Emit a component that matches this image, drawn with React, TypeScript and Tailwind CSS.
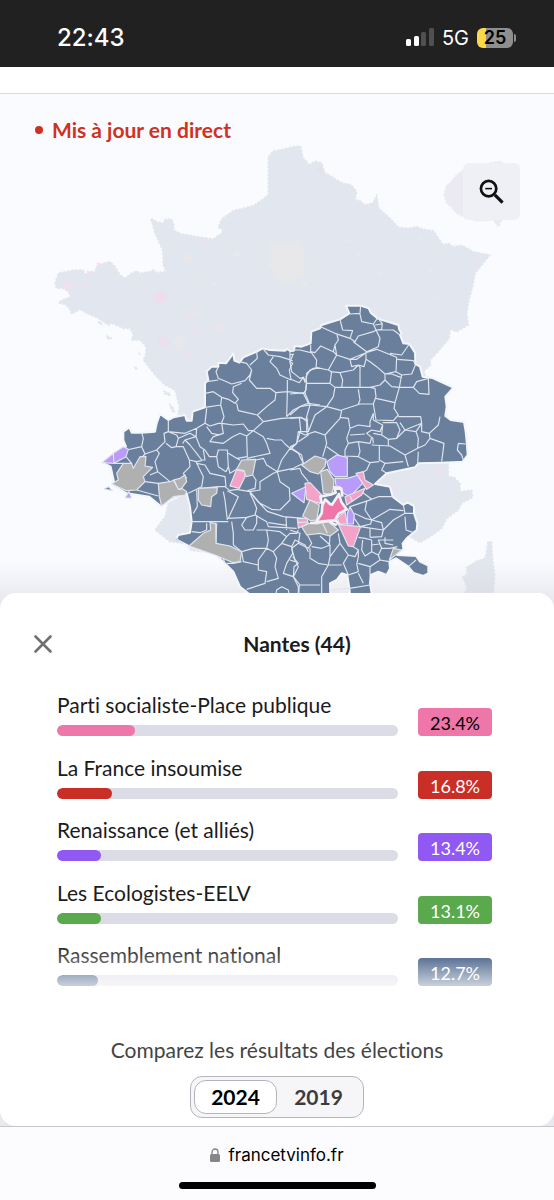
import { useState } from "react";

interface Result {
    party: string;
    score: string;
    width: number;
    color: string;
    text: string;
}

interface Zone {
    fill: string;
    d: string;
}

const results: Result[] = [
    { party: "Parti socialiste-Place publique", score: "23.4%", width: 23, color: "bg-[#ee76a9]", text: "text-black" },
    { party: "La France insoumise", score: "16.8%", width: 16, color: "bg-[#c92f27]", text: "text-white" },
    { party: "Renaissance (et alliés)", score: "13.4%", width: 13, color: "bg-[#9159f3]", text: "text-white" },
    { party: "Les Ecologistes-EELV", score: "13.1%", width: 13, color: "bg-[#5aa94d]", text: "text-white" },
    { party: "Rassemblement national", score: "12.7%", width: 12, color: "bg-[#264573]", text: "text-white" },
];

const years = ["2024", "2019"];

const BLUE = "#6a7f9c";
const GREY = "#b0b0b0";
const PURPLE = "#b99bfb";
const PINK = "#f3a3c8";

// mainland, clockwise from the northern tip
const france =
    "M805 190 818 172 850 166 880 158 902 156 908 190 928 212 945 202 965 206 974 236 992 246 1010 258 1030 268 1054 273 1070 293 1065 318 1080 320 1095 333 1120 326 1130 303 1136 343 1170 373 1195 400 1225 403 1250 398 1270 406 1300 410 1330 453 1345 448 1360 458 1385 454 1420 473 1470 483 1425 538 1418 578 1407 618 1400 658 1405 693 1370 713 1350 706 1348 733 1310 778 1290 798 1292 813 1270 833 1330 930 1348 1000 1345 1110 1345 1148 1362 1150 1380 1168 1380 1193 1415 1188 1418 1210 1385 1228 1375 1248 1340 1273 1325 1303 1290 1328 1260 1346 1225 1325 1150 1380 700 1380 575 1370 555 1348 510 1343 465 1308 495 1268 505 1228 560 1198 620 1100 620 1000 535 960 538 938 530 908 525 888 495 873 465 843 430 798 438 778 438 758 420 738 395 738 400 723 390 703 370 703 335 688 325 693 295 673 265 660 240 646 215 660 210 648 200 633 175 626 190 616 212 610 205 593 190 583 170 583 165 568 175 538 205 531 225 528 250 528 255 540 285 533 290 518 310 508 330 503 345 518 360 543 375 553 395 538 410 531 420 538 450 533 460 528 470 536 498 533 490 513 488 468 465 418 452 373 470 383 490 388 495 376 515 376 522 393 520 408 545 420 560 422 590 428 640 435 665 418 668 408 655 400 665 375 700 350 760 335 790 315 805 302Z";

const corsica =
    "M1464 1345 1475 1342 1478 1400 1484 1440 1480 1498 1466 1545 1410 1545 1395 1498 1402 1480 1388 1450 1402 1440 1400 1420 1430 1402 1456 1392Z";

const parisInset =
    "M1390 228 1365 248 1352 266 1340 273 1332 303 1340 328 1355 340 1370 358 1400 373 1430 380 1480 378 1495 398 1506 376 1550 340 1550 240 1500 202 1475 206Z";

// faint areas left over inside the dimmed mainland: x, y, radius, colour
const specks: [number, number, number, string][] = [
    [204, 576, 12, "#eee2ef"], [232, 578, 6, "#eae3ef"], [256, 572, 6, "#ebe3ef"], [268, 540, 8, "#eae3ef"],
    [298, 514, 6, "#efe2ef"], [482, 610, 18, "#ecdeee"], [490, 742, 14, "#ebdfee"], [540, 744, 18, "#e8e7ec"],
    [563, 494, 12, "#e8e8ec"], [710, 480, 8, "#e9e9ed"], [608, 448, 7, "#e9e1ee"], [656, 702, 12, "#e8e6ec"],
    [590, 718, 9, "#e9e1ee"], [568, 666, 12, "#e8e6ec"], [590, 656, 8, "#e8e6ec"], [562, 782, 8, "#ebe0ee"],
    [572, 572, 6, "#e8e6ed"], [600, 568, 5, "#e8e6ed"], [756, 410, 5, "#e8e6ed"], [876, 344, 6, "#e8e6ed"],
    [850, 286, 4, "#e8e6ed"], [720, 726, 9, "#e8e6ed"], [838, 650, 6, "#e8e6ed"], [824, 716, 5, "#e8e6ed"],
    [1040, 440, 4, "#e9e8ef"], [1260, 432, 4, "#e9e8ef"], [1142, 538, 4, "#e9e8ef"], [1428, 506, 8, "#e6e4ee"],
    [960, 230, 9, "#e5e2ec"], [1290, 528, 4, "#e9e8ef"], [1300, 606, 4, "#e9e8ef"], [1074, 482, 3, "#e9e8ef"],
    [912, 570, 6, "#e8e8ec"], [925, 712, 5, "#e8e6ed"], [1180, 1180, 8, "#eae2ee"], [1230, 1160, 6, "#eae2ee"],
    [1320, 1130, 10, "#e9e3ef"], [1280, 1185, 4, "#eae2ee"], [640, 570, 4, "#e9e8ef"],
];

const idf =
    "M812 440 822 450 835 444 848 454 862 440 876 450 892 442 900 458 912 470 908 485 914 500 908 520 912 538 900 550 892 545 880 566 868 558 855 568 845 555 830 558 822 545 824 525 810 515 818 495 808 480 818 465Z";

const zoomedArea =
    "M430 160 433 182 448 188 460 172 500 155 518 145 540 150 585 152 592 147 600 153 612 152 614 138 635 140 662 130 664 95 690 85 695 75 750 58 778 40 768 17 812 17 836 25 842 38 862 55 870 58 925 75 928 90 935 100 930 105 940 130 958 132 975 158 976 192 990 200 998 230 1028 234 1090 263 1066 290 1070 320 1066 348 1082 360 1122 366 1127 395 1130 425 1133 465 1118 485 1055 488 985 490 975 502 890 520 855 552 900 560 908 590 940 615 952 607 972 618 972 640 982 670 980 690 950 715 938 730 940 748 922 765 978 768 990 785 1015 797 1015 820 1000 828 970 818 955 800 918 775 898 785 900 805 890 825 865 815 842 825 840 850 845 880 845 930 785 930 778 865 772 825 755 820 740 840 720 850 722 930 490 930 475 880 450 860 430 815 400 785 378 765 300 740 258 718 265 705 300 698 305 665 300 620 290 580 260 590 212 618 178 590 110 580 66 553 72 545 62 500 38 488 70 460 108 440 100 420 100 395 118 382 125 398 155 398 195 395 200 370 210 342 235 360 250 352 285 345 290 362 305 362 308 335 345 322 345 250 355 240 350 215 365 200 385 200 385 188 408 190Z";

const westBorders =
    "M385 200 378 215 385 235 425 252 465 242 480 225 485 210 470 190 448 185M350 245 385 240M485 210 478 240 500 265 540 265 558 278 592 275M345 280 370 275 395 292 415 298 435 310 445 298 428 278 430 260 455 250M395 292 392 315 402 350 395 368M345 322 392 315M558 278 555 300 530 320 502 345 445 332 440 310M502 345 520 365 490 392M520 365 575 355 628 352 655 360M592 240 592 275 590 350M600 155 600 185 608 190 598 210 603 238 628 248 640 232 645 248M518 145 535 165 570 170 608 182M550 170 540 185 560 205 570 225 603 240M500 155 502 175 480 195M592 275 640 280 648 270 650 220 670 205 690 205M640 280 655 310 690 315M590 350 610 330 640 315 655 310M650 350 650 395 655 405 625 425M628 352 632 390 620 430 600 445 585 432 575 420 555 420 530 415M235 360 235 395 285 400 320 385 345 370 350 325M155 398 160 415 155 440 110 450M235 395 222 400 225 425 200 450M235 395 260 405 265 415 258 440 245 443 228 430M265 415 300 400 318 410 285 420 278 430M320 385 318 410 330 440 345 450 358 470 380 470 385 450 412 450 415 500 408 515M285 420 300 435 320 460 335 480 345 480 340 450M258 440 280 440 298 480 320 485 335 482M345 370 360 378 385 370 395 370 400 400 370 410 360 425 400 430 428 410 450 400 470 408 472 470 440 475 415 460M395 370 430 375 460 372 475 392 490 392 520 410 530 430 535 445 540 460 470 475M350 380 365 400 390 405M470 408 490 392M600 445 575 480 562 515 530 495 520 475 498 480M600 445 625 460 640 490 610 505 562 515M440 475 450 480M562 515 550 520 510 545 510 570 480 575M562 515 570 545 598 565 600 600 570 630 545 628 510 610 480 575M488 525 498 540 495 565 470 573M200 450 165 462 150 478M200 450 208 460 195 485 203 515 180 525M203 515 240 545M155 440 165 462M108 470 125 490M100 490 72 490M165 545 205 550M140 570 205 588M298 480 300 500 280 520 290 535M318 485 330 510 340 530 335 560 295 580M320 490 345 495 360 520 405 530 408 560M380 470 385 500 408 515M335 565 385 560 405 560 420 572 440 568 480 575M440 508 420 520 415 500M320 570 322 620 310 640M400 575 405 600 412 660M300 665 415 665M412 572 445 590 415 655 470 652 495 645 500 625 490 600 480 580M476 572 505 606 532 634 580 650 640 655M495 645 530 665 535 680 620 685M535 668 590 676M588 652 590 690M470 652 455 675 465 690 490 690 500 670 500 645M425 665 430 700 430 735M350 670 350 690 330 698 305 695M380 670 378 730M430 735 455 755 490 745 530 745 535 720 530 690 500 690M530 690 570 695 590 710 575 730 550 755 530 745 505 780 505 810M455 755 460 785 505 795 505 810 530 815 525 850 470 868M550 755 560 775 555 800 565 835 530 845M575 730 605 740 608 760 590 790 580 820 610 830 612 800 625 790 608 770M605 740 615 720 645 735 655 755M590 710 600 700 620 700 625 690M610 830 625 860 625 900M555 900 560 870 575 860 595 870 600 900M455 785 430 790 410 790M378 755 400 775 405 790";

const eastBorders =
    "M180 42 210 40 212 17M210 42 215 65 250 72 262 55M150 58 158 90 188 92 180 115 135 100 92 80M180 115 195 125 205 108 250 95 258 90 250 72M258 90 275 88 277 70 268 60M275 72 255 75M258 90 310 90 330 105M258 90 270 115 265 140 230 155 190 125M140 100 145 120 135 135 140 165 180 178 228 158M62 135 62 155 75 158 92 138 130 155 140 165M130 155 135 135M62 155 80 180 78 205 60 210M0 150 30 150 62 158M0 165 10 162 0 185 5 215 30 235 40 232 48 245M140 165 115 210 80 203 60 210 48 230 50 250 120 250 125 215 115 210M120 215 150 218 158 240 155 262 135 262 120 250M150 218 190 210 205 195 212 205M180 178 185 200 205 195 222 200 228 178 228 158 200 178 180 178M228 158 260 148 320 172 318 215 285 222 260 200 240 185 228 178M210 205 210 262M300 160 335 165 358 132M322 178 370 182 376 192M318 215 335 225 365 222 376 195M335 225 328 262 370 262 380 245 415 235 417 283 388 280 370 262M285 222 285 240 270 255 240 262 210 262 155 262M285 240 305 260 328 262M285 222 305 222 332 232M240 262 255 265 258 290 250 312 210 312 155 330M135 262 130 290 110 320 155 332M205 268 210 300 205 312M50 250 45 280 60 315 110 320M0 282 45 278M0 345 30 320 60 315M0 355 35 352 50 365M60 315 50 350 55 395M110 320 75 345 55 395M105 405 150 355 155 332M150 352 175 355 180 385 170 415 175 430M258 295 315 308 328 262M315 308 312 325 325 345 310 362 258 360 250 312M325 350 392 350 395 370 345 390 330 368M250 340 240 365 240 380 205 375 180 385M250 340 250 360 278 375 270 395 245 390 230 400 245 412 240 430 205 425M225 402 180 405M248 412 250 430M278 368 320 368 330 390 320 415 295 418 275 405 278 375M250 400 275 405M295 418 295 438M345 390 378 395 385 415 383 445 345 465 300 438 245 435M320 415 345 390M378 395 395 370 395 395 418 400 420 415 405 435 383 445M418 400 445 375 450 350M420 415 462 430 455 485M385 455 383 490M505 430 502 450 515 465 520 480M505 430 527 432M345 465 355 500M340 485 285 490 268 480 268 438M285 490 275 510 290 520M268 485 240 488 230 510 205 525M205 425 210 455 205 470 165 468 165 450 175 430 205 425M240 488 205 470M55 395 25 395 20 430 5 445 35 465 40 490M25 395 45 405 75 395 105 405 110 430 98 470M110 440 150 468M0 440 18 432M30 505 35 520 55 545M30 505 0 510M218 550 250 555M215 575 245 598 265 590 308 590M180 620 225 605 245 598M193 640 225 655 245 660 225 630 230 605M245 660 300 628 340 632M245 660 275 668 280 690 310 660 345 640M345 650 348 690 370 698M340 615 345 640 370 640M210 680 245 685 280 690 275 710 240 712M193 655 210 680 242 672 245 660M240 685 240 712M205 712 225 715 245 720 245 755 225 768 215 750 218 720M190 740 205 750 205 770 200 795M245 755 265 765 275 745 265 720 310 720M245 735 268 732M275 745 300 745 322 740M285 712 285 730 310 735M265 765 270 780 240 800 205 790M270 780 298 785M0 690 30 700 25 730 5 745M50 700 65 730 55 745 25 730M90 708 120 735 95 745 65 740M120 708 118 735M60 745 60 775 85 790 115 795 120 770 150 730 145 700M120 735 120 770M150 730 175 765 195 770 205 750M175 765 160 790 175 825 205 815 200 790M155 795 115 795 95 830 95 880M5 745 15 780 25 800 10 830 30 855 90 855M0 780 15 785M28 855 25 900M120 870 178 865 240 855M205 820 220 850M240 800 240 825M355 800 378 780";

const westZones: Zone[] = [
    { fill: PURPLE, d: "M36 488 70 460 100 440 115 448 108 470 72 490ZM70 460 72 490" },
    { fill: GREY, d: "M65 552 85 540 80 520 100 490 125 490 130 505 150 470 168 470 165 498 188 502 160 530 165 545 140 570 110 572Z" },
    { fill: PURPLE, d: "M105 594 117 575 125 594Z" },
    { fill: BLUE, d: "M42 567 55 560 68 572Z" },
    { fill: GREY, d: "M205 550 240 545 252 540 265 568 275 565 290 575 285 585 250 590 215 618 208 590ZM250 540 270 535 285 525 290 545 272 568 265 568Z" },
    { fill: GREY, d: "M325 565 382 562 380 580 365 590 362 620 335 615 325 600Z" },
    { fill: GREY, d: "M297 738 340 700 362 690 360 668 377 670 378 730 420 738 455 755 450 785 430 788 375 765Z" },
    { fill: PURPLE, d: "M250 718 260 716 280 732Z" },
    { fill: PINK, d: "M440 508 465 515 465 530 448 565 420 558Z" },
    { fill: GREY, d: "M455 480 497 478 488 525 468 530 462 512 440 508Z" },
];

const eastZones: Zone[] = [
    { fill: GREY, d: "M35 495 75 468 108 478 105 500 85 522 60 515Z" },
    { fill: PURPLE, d: "M110 485 140 465 172 472 172 530 135 530 120 515Z" },
    { fill: GREY, d: "M92 515 112 508 132 540 130 565 125 585 100 580Z" },
    { fill: PURPLE, d: "M135 535 172 535 205 525 218 550 180 590 160 580 150 560 138 558Z" },
    { fill: PINK, d: "M198 520 220 515 225 540 250 555 230 568 218 550 205 530Z" },
    { fill: PINK, d: "M165 590 225 565 215 585 170 615ZM180 588 188 605" },
    { fill: PURPLE, d: "M5 580 48 560 42 608Z" },
    { fill: PINK, d: "M45 550 60 548 95 585 90 610 50 598Z" },
    { fill: GREY, d: "M60 600 88 615 80 660 62 662 38 648Z" },
    { fill: PINK, d: "M22 655 50 655 55 670 25 685ZM24 668 55 666" },
    { fill: GREY, d: "M35 680 60 670 80 672 115 665 145 690 120 708 90 700 50 705ZM98 670 112 700" },
    { fill: PINK, d: "M145 673 212 680 190 740 175 738Z" },
    { fill: PURPLE, d: "M172 640 180 620 193 645 190 672 172 672Z" },
    { fill: PINK, d: "M140 655 165 635 172 672 150 672Z" },
    { fill: GREY, d: "M298 780 310 745 335 750Z" },
];

const StatusBar = () => (
    <header className="flex h-[67px] items-center justify-between bg-[#212121] pt-2 pr-[38px] pl-[57px] font-['Inter',sans-serif] text-white">
        <time className="text-2xl font-medium">22:43</time>
        <div className="flex items-center gap-2">
            <svg width="28" height="19" viewBox="0 0 28 19" aria-hidden="true">
                <rect x="0" y="11" width="5" height="7" rx="1.5" fill="#fff" />
                <rect x="8" y="8" width="5" height="10" rx="1.5" fill="#fff" />
                <rect x="15" y="4" width="5" height="14" rx="1.5" fill="#505050" />
                <rect x="23" y="0" width="5" height="18" rx="1.5" fill="#505050" />
            </svg>
            <span className="text-xl">5G</span>
            <div className="flex items-center gap-px">
                <span className="flex h-5 w-9 items-center justify-center rounded-md bg-linear-to-r from-[#fbd84a] from-25% to-[#8e8e8e] to-25% text-lg font-semibold text-black">
                    25
                </span>
                <span className="h-2 w-0.5 rounded-r bg-[#8e8e8e]" />
            </div>
        </div>
    </header>
);

const ElectionMap = () => (
    <svg viewBox="0 0 1662 1545" className="block w-full" role="img" aria-label="Carte des résultats par commune">
        <defs>
            <linearGradient id="shade" x1="0" y1="0" x2="0" y2="1">
                <stop offset="0" stopColor="#d6d6dc" stopOpacity="0" />
                <stop offset="1" stopColor="#d6d6dc" stopOpacity="0.6" />
            </linearGradient>
        </defs>
        <g fill="#e2e6ee" stroke="#e2e6ee" strokeWidth="5" strokeDasharray="7 5" strokeLinejoin="round">
            <path d={france} />
            <path d={corsica} />
            <path d={parisInset} fill="#ebeaf3" stroke="#ebeaf3" />
            <path d="M296 684h6l4 6h-8zM320 726l14 6-4 4-10-4zM404 820l10 3-8 2zM416 776l6 8zM492 892l20 8-4 4-14-5zM508 930l12 12 4 14-8-6z" />
        </g>
        <path d={idf} fill="#e8e8ea" stroke="#e8e8ea" strokeWidth="10" strokeDasharray="4 5" />
        {specks.map(([x, y, r, color]) => (
            <circle key={`${x}-${y}`} cx={x} cy={y} r={r} fill={color} stroke={color} strokeWidth="8" strokeDasharray="4 6" />
        ))}
        <rect x="0" y="1400" width="1662" height="145" fill="url(#shade)" />
        <g transform="translate(270 618)" strokeLinejoin="round" stroke="#dfe6ef" strokeWidth="3.5">
            <path d={zoomedArea} fill={BLUE} stroke="#f3f6fa" strokeWidth="6" />
            <path d={westBorders} fill="none" />
            <path d={eastBorders} fill="none" transform="translate(600 0)" />
            {westZones.map((zone) => (
                <path key={zone.d} d={zone.d} fill={zone.fill} />
            ))}
            <g transform="translate(600 0)">
                {eastZones.map((zone) => (
                    <path key={zone.d} d={zone.d} fill={zone.fill} />
                ))}
                <path
                    d="M96 612 91 590 120 584 137 578 133 562 154 566 157 590M60 669 84 667M134 659 146 672M120 666 140 676"
                    fill="none"
                    stroke="#f3f1f5"
                    strokeWidth="8"
                />
                <path
                    d="M78 667 95 640 97 616 106 598 120 612 126 614 147 582 154 606 170 628 146 641 134 661 100 664Z"
                    fill="#ee76a9"
                    stroke="#f3f1f5"
                    strokeWidth="8"
                />
            </g>
        </g>
    </svg>
);

const ResultRow = ({ party, score, width, color, text }: Result) => (
    <li className="flex items-end gap-5">
        <div className="flex-1">
            <p className="pb-2 text-[21px]/6">{party}</p>
            <div className="h-[11px] overflow-hidden rounded-full bg-[#dcdce6]">
                <div className={`h-full rounded-full ${color}`} style={{ width: `${width}%` }} />
            </div>
        </div>
        <span className={`h-7 w-[74px] rounded pt-[3px] text-center text-lg/6 ${color} ${text}`}>{score}</span>
    </li>
);

export default function App() {
    const [year, setYear] = useState("2024");

    return (
        <div className="bg-white font-['Lato',sans-serif] text-[#1b1b1b] [font-variant-ligatures:none]">
            <StatusBar />
            <div className="h-[27px] border-b border-[#d9d9e3]" />

            <main className="bg-[#e8e8ee]">
                <section className="relative bg-[#fafbff]">
                    <ElectionMap />
                    <p className="absolute top-6 left-[35px] flex items-center gap-[9px] text-[21px]/6 font-bold text-[#cf3222]">
                        <span className="size-2 rounded-full bg-[#cf3222]" />
                        Mis à jour en direct
                    </p>
                    <button
                        type="button"
                        aria-label="Dézoomer"
                        className="absolute top-[69px] right-[34px] flex size-[57px] items-center justify-center rounded-md bg-[#efeff6]"
                    >
                        <svg width="25" height="25" viewBox="0 0 26 26" fill="none" stroke="#111" aria-hidden="true">
                            <circle cx="10" cy="10" r="8" strokeWidth="2.8" />
                            <path d="M6.5 10h7" strokeWidth="1.6" />
                            <path d="m16.5 16.5 8 8" strokeWidth="3.4" />
                        </svg>
                    </button>
                </section>

                <section className="relative -mt-4 rounded-2xl bg-white pb-2">
                    <div className="flex items-center pt-[37px] pr-3 pl-[34px]">
                        <button type="button" aria-label="Fermer">
                            <svg width="18" height="18" viewBox="0 0 18 18" stroke="#707070" strokeWidth="2.6" strokeLinecap="round" aria-hidden="true">
                                <path d="m1.5 1.5 15 15M16.5 1.5l-15 15" />
                            </svg>
                        </button>
                        <h2 className="flex-1 text-center text-[21px]/7 font-bold">Nantes (44)</h2>
                    </div>

                    <div className="relative pt-[35px] pr-[62px] pb-[14px] pl-[57px]">
                        <ul className="flex h-[293px] flex-col justify-between">
                            {results.map((result) => (
                                <ResultRow key={result.party} {...result} />
                            ))}
                        </ul>
                        <div className="pointer-events-none absolute inset-x-0 bottom-0 h-14 bg-linear-to-b from-transparent to-white" />
                    </div>

                    <fieldset className="pt-[38px]">
                        <legend className="float-left w-full text-center text-[21px]/6 text-[#444]">
                            Comparez les résultats des élections
                        </legend>
                        <div className="clear-both pt-[14px]">
                            <div className="mx-auto flex h-[42px] w-[174px] rounded-xl border border-[#b4b4be] bg-[#f6f6f9] p-[3px]">
                                {years.map((item) => (
                                    <label
                                        key={item}
                                        className={`relative flex flex-1 cursor-pointer items-center justify-center rounded-xl border text-[21px] font-bold ${item === year ? "border-[#b4b4be] bg-white text-black" : "border-transparent text-[#3c3c3c]"}`}
                                    >
                                        <input
                                            type="radio"
                                            name="year"
                                            value={item}
                                            checked={item === year}
                                            onChange={() => setYear(item)}
                                            className="absolute inset-0 cursor-pointer appearance-none"
                                        />
                                        {item}
                                    </label>
                                ))}
                            </div>
                        </div>
                    </fieldset>
                </section>
            </main>

            <footer className="flex flex-col items-center border-t border-[#c6c6cb] bg-[#fcfcfe] pt-4 pb-[11px] font-['Inter',sans-serif]">
                <button type="button" className="flex items-center gap-2 text-[17px]/6 text-black">
                    <svg width="10" height="14" viewBox="0 0 10 14" fill="#85858a" aria-hidden="true">
                        <rect x="0" y="6" width="10" height="8" rx="1.5" />
                        <path d="M2 7V4a3 3 0 0 1 6 0v3" fill="none" stroke="#85858a" strokeWidth="1.3" />
                    </svg>
                    francetvinfo.fr
                </button>
                <div className="mt-[15px] h-[7px] w-[197px] rounded-full bg-black" />
            </footer>
        </div>
    );
}
